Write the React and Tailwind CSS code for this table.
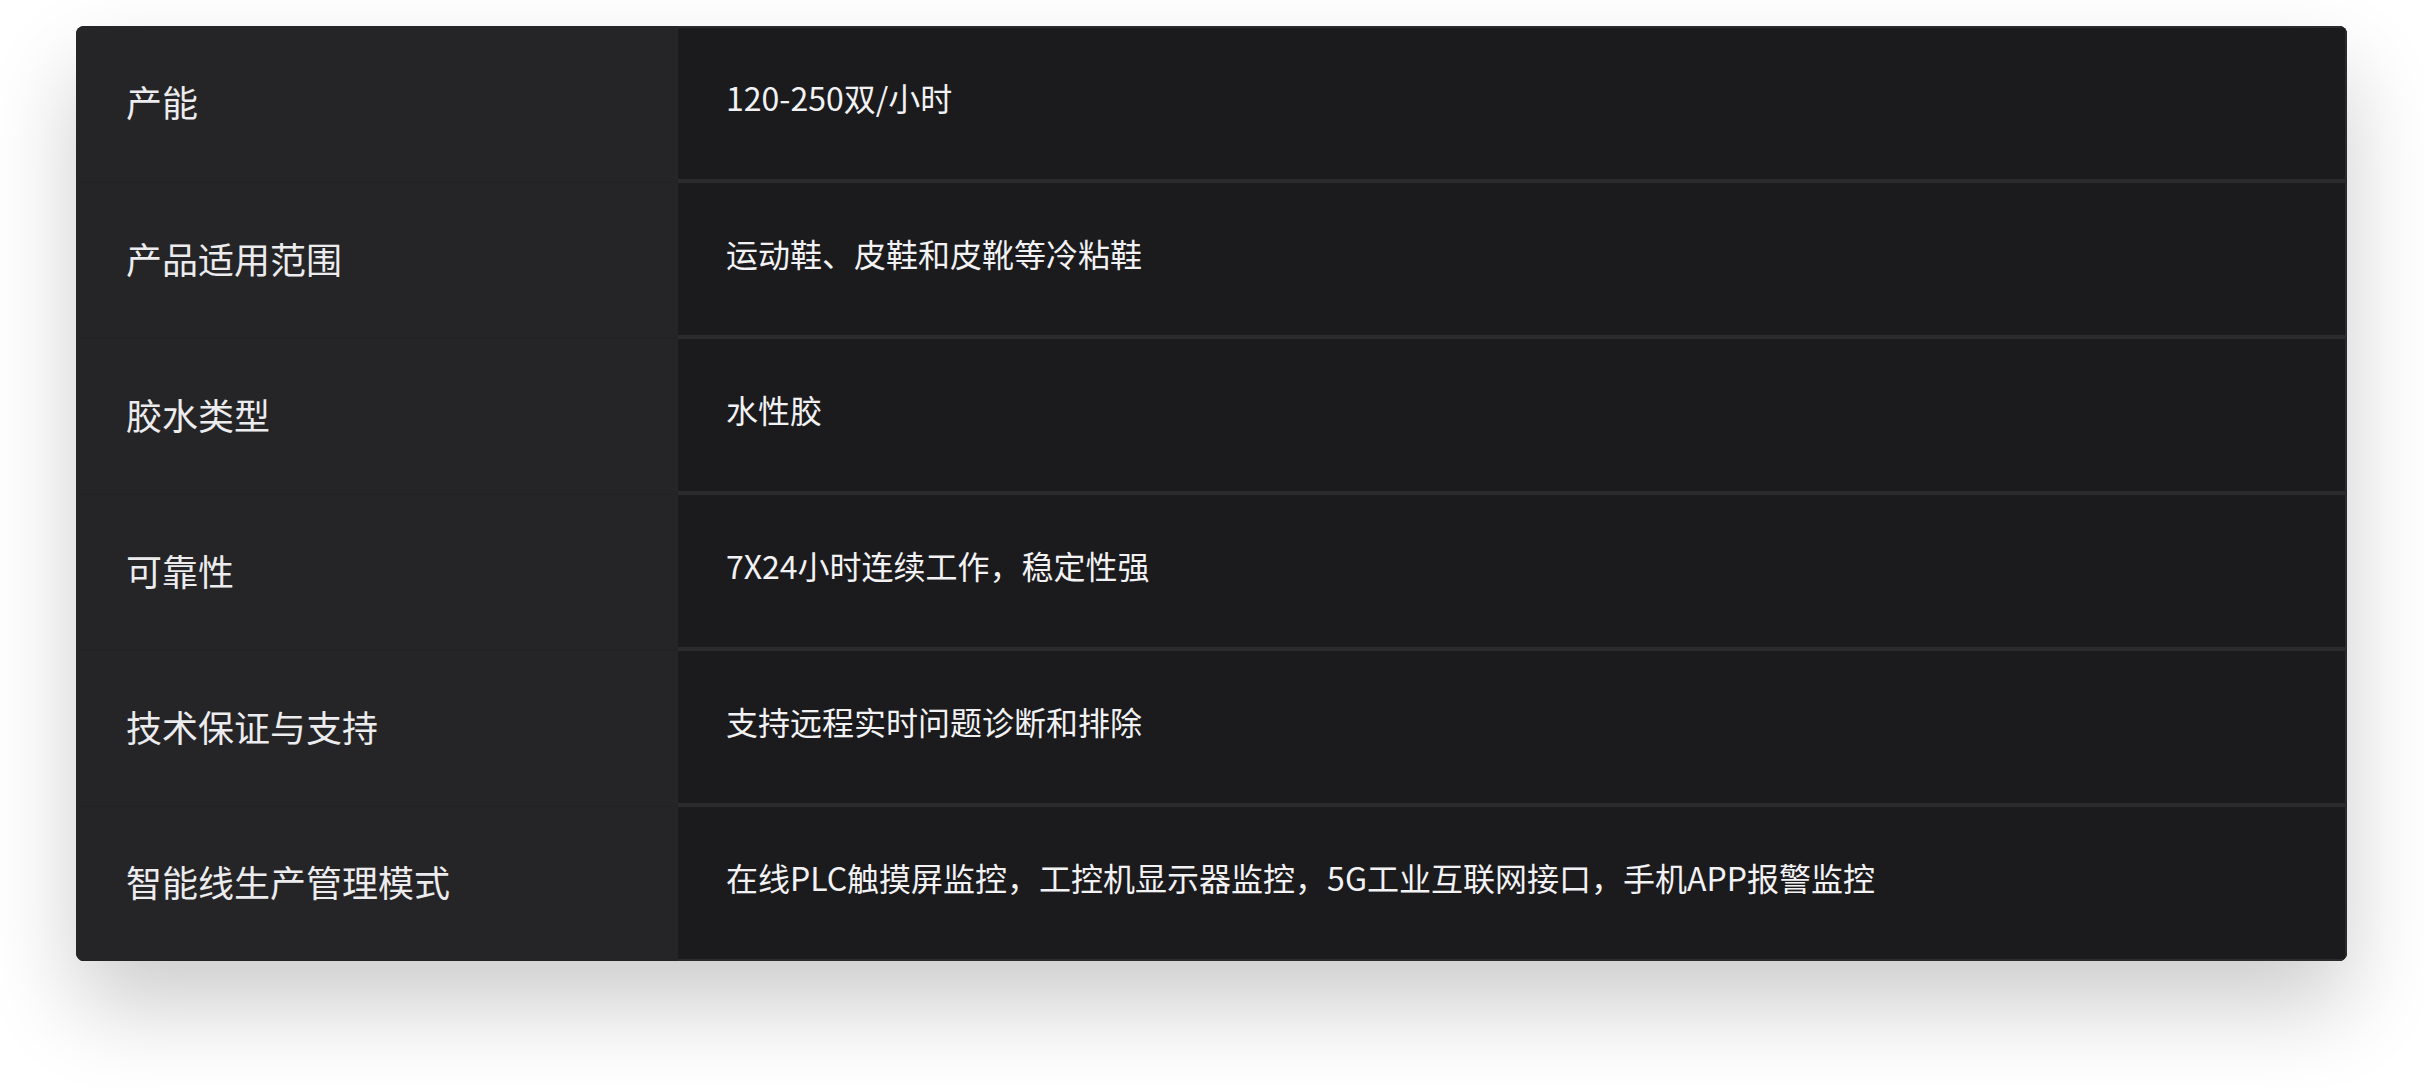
import React from "react";

const rows = [
    { label: "产能", value: "120-250双/小时" },
    { label: "产品适用范围", value: "运动鞋、皮鞋和皮靴等冷粘鞋" },
    { label: "胶水类型", value: "水性胶" },
    { label: "可靠性", value: "7X24小时连续工作，稳定性强" },
    { label: "技术保证与支持", value: "支持远程实时问题诊断和排除" },
    { label: "智能线生产管理模式", value: "在线PLC触摸屏监控，工控机显示器监控，5G工业互联网接口，手机APP报警监控" },
];

export default function App() {
    return (
        <div className="min-h-[1088px] w-full bg-white pl-[76px] pt-[26px] font-['Noto_Sans_CJK_SC','Noto_Sans',sans-serif]">
            <div className="w-[2271px] overflow-hidden rounded-lg bg-[#252527] shadow-[0_45px_90px_rgba(0,0,0,0.2)]">
                {rows.map((row, i) => {
                    const first = i === 0;
                    const last = i === rows.length - 1;
                    return (
                        <div key={row.label} className={`flex ${first ? "h-[157px]" : last ? "h-[154px]" : "h-[156px]"}`}>
                            {/* label column */}
                            <div className="flex w-[602px] items-center border-b border-[#222224] bg-[#252527] pb-[6px] pl-[50px] text-[36px] text-[#ececee]">
                                {row.label}
                            </div>
                            {/* value column */}
                            <div
                                className={`flex flex-1 items-center border-r-2 border-[#2b2b2e] bg-[#1b1b1d] pb-[13px] pl-[48px] text-[32px] text-[#f2f2f4] ${
                                    first ? "border-t-2" : ""
                                } ${last ? "border-b-2" : "border-b-4"}`}
                            >
                                {row.value}
                            </div>
                        </div>
                    );
                })}
            </div>
        </div>
    );
}
